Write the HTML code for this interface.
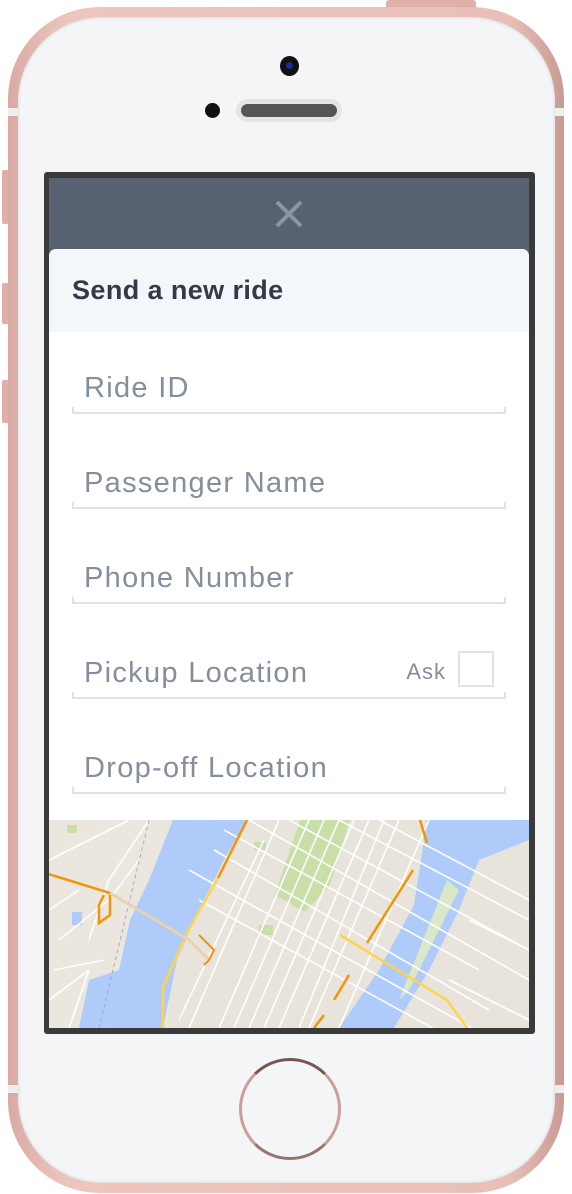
<!DOCTYPE html>
<html><head><meta charset="utf-8"><style>
*{margin:0;padding:0;box-sizing:border-box}
body{width:572px;height:1194px;background:#fff;position:relative;overflow:hidden;font-family:"Liberation Sans",sans-serif}
.abs{position:absolute}
.frame{left:8px;top:7px;width:556px;height:1186px;border-radius:92px;background:linear-gradient(90deg,#d9aaa3,#ecc5bd 10%,#e9c0b8 90%,#c99a93);}
.inner{left:18px;top:17px;width:537px;height:1166px;border-radius:84px;background:#f4f5f7;box-shadow:inset 0 0 3px #ccc}
.btn{background:#e0b0a8;border-radius:2px}
.screen{left:44px;top:172px;width:491px;height:862px;background:#3a3a3a;border-radius:3px}
.hdr{left:49px;top:178px;width:480px;height:80px;background:#58616f}
.card{left:49px;top:249px;width:480px;height:572px;background:#fff;border-radius:7px 7px 0 0;overflow:hidden}
.chead{height:83px;background:#f4f7fa;padding:26px 0 0 23px;font-weight:bold;font-size:27px;color:#333a47;letter-spacing:.4px}
.field{position:absolute;left:23px;width:434px;height:30px;border-bottom:2px solid #dde3ec}
.field:before,.field:after{content:"";position:absolute;bottom:-2px;width:2px;height:7px;background:#dde3ec}
.field:before{left:0}.field:after{right:0}
.ph{position:absolute;left:12px;bottom:7px;font-size:29px;color:#858e9e;letter-spacing:1.3px;white-space:nowrap}
.ask{position:absolute;right:60px;bottom:12px;font-size:22px;color:#858e9e;letter-spacing:1px}
.cb{position:absolute;right:12px;bottom:10px;width:36px;height:36px;border:2px solid #dde3ec}
</style></head><body>
<div class="abs btn" style="left:386px;top:0;width:90px;height:9px;border-radius:3px 3px 0 0"></div>
<div class="abs btn" style="left:2px;top:170px;width:9px;height:54px"></div>
<div class="abs btn" style="left:2px;top:283px;width:9px;height:41px"></div>
<div class="abs btn" style="left:2px;top:380px;width:9px;height:43px"></div>
<div class="abs frame"></div>
<div class="abs" style="left:8px;top:108px;width:556px;height:8px;background:#eee"></div>
<div class="abs" style="left:8px;top:1085px;width:556px;height:8px;background:#eee"></div>
<div class="abs inner"></div>
<div class="abs" style="left:280px;top:56px;width:19px;height:20px;border-radius:50%;background:#111"><div style="margin:6px;width:7px;height:7px;border-radius:50%;background:#1a2e8a"></div></div>
<div class="abs" style="left:205px;top:103px;width:15px;height:15px;border-radius:50%;background:#111"></div>
<div class="abs" style="left:236px;top:99px;width:106px;height:23px;border-radius:12px;background:#e4e4e4"></div>
<div class="abs" style="left:241px;top:104px;width:96px;height:13px;border-radius:7px;background:#555"></div>
<div class="abs screen"></div>
<div class="abs hdr"></div>
<svg class="abs" style="left:274px;top:199px" width="30" height="30"><path d="M3 3L27 27M27 3L3 27" stroke="#8d95a2" stroke-width="4"/></svg>
<div class="abs card">
<div class="chead">Send a new ride</div>
<div class="field" style="top:135px"><span class="ph">Ride ID</span></div>
<div class="field" style="top:230px"><span class="ph">Passenger Name</span></div>
<div class="field" style="top:325px"><span class="ph">Phone Number</span></div>
<div class="field" style="top:420px"><span class="ph">Pickup Location</span><span class="ask">Ask</span><span class="cb"></span></div>
<div class="field" style="top:515px"><span class="ph">Drop-off Location</span></div>
</div>
<svg class="abs" style="left:49px;top:820px" width="480" height="208" viewBox="0 0 480 208">
<rect width="480" height="208" fill="#e8e4dc"/>
<rect width="120" height="208" fill="#ebe7df"/>
<polygon points="124,0 198,0 175,40 150,90 128,140 114,208 58,208 70,150 81,100 100,60" fill="#aecbfa"/>
<polygon points="58,208 30,208 40,160 70,150" fill="#aecbfa"/>
<rect x="23" y="92" width="10" height="13" fill="#aecbfa"/>
<polygon points="378,0 480,0 480,208 290,208 330,150 365,85" fill="#aecbfa"/>
<polygon points="430,40 480,20 480,208 345,208 380,150 410,90" fill="#e8e4dc"/>
<polygon points="398,60 410,70 360,170 350,180" fill="#d8e8c8"/>
<polygon points="251,0 301,0 281,65 256,92 226,75" fill="#c8dfa8"/>
<rect x="18" y="5" width="10" height="8" fill="#c8dfa8"/><rect x="205" y="22" width="12" height="8" fill="#c8dfa8"/><rect x="210" y="105" width="14" height="10" fill="#c8dfa8"/>
<g stroke="#fff" stroke-width="1.6" fill="none">
<path d="M140 50L480 240M150 80L460 250M165 30L440 190M175 10L430 150M200 0L480 160M240 0L480 130M290 0L480 100M330 0L480 80"/>
<path d="M230 0L140 208M260 0L170 208M290 0L200 208M320 0L230 208M350 0L260 208M380 0L290 208M215 20L130 200M335 0L250 208M305 0L215 208M275 0L185 208"/>
<path d="M0 40L40 20L80 0M10 120L60 80L90 40M0 180L40 150M20 208L40 150M100 0L60 60L40 120M420 100L480 130M400 160L480 200M0 90L30 70M5 150L55 140"/>
</g>
<path d="M100 0L50 208" stroke="#aab" stroke-width="1" stroke-dasharray="4 3" fill="none"/>
<path d="M-4 53L61 73L61 95L50 103L50 85L55 75" stroke="#f49400" stroke-width="2.5" fill="none"/>
<path d="M198 0L169 58" stroke="#f49400" stroke-width="2.5"/>
<path d="M169 58L138 113L114 167L114 208" stroke="#fdd44a" stroke-width="2.5" fill="none"/>
<path d="M61 73L140 120L160 140" stroke="#e8d2b0" stroke-width="3" fill="none"/>
<path d="M150 115L165 130L160 140L155 145" stroke="#f49400" stroke-width="2" fill="none"/>
<path d="M371 0L378 23M364 50L318 123M300 155L285 180M275 195L265 208" stroke="#f49400" stroke-width="2.5"/>
<path d="M291 115L398 180L418 208" stroke="#fdd44a" stroke-width="2.5" fill="none"/>
</svg>
<div class="abs" style="left:239px;top:1058px;width:102px;height:102px;border-radius:50%;border:3px solid #c8a098;border-top-color:#7a5550;border-bottom-color:#9a746c"></div>
</body></html>
